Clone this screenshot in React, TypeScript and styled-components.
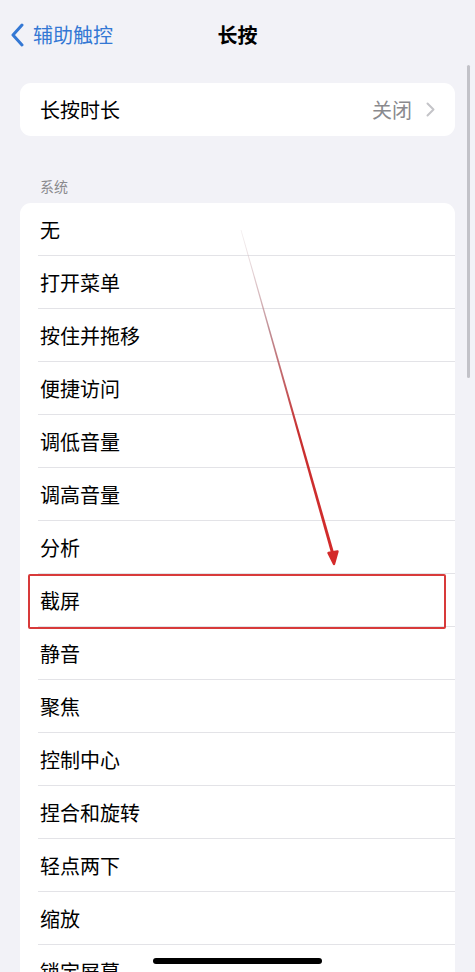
import React from "react";
import styled, { createGlobalStyle } from "styled-components";

const GlobalStyle = createGlobalStyle`
  html, body {
    margin: 0;
    padding: 0;
    background: #f2f2f7;
  }
  body {
    font-family: "Noto Sans CJK SC", "Noto Sans", sans-serif;
    -webkit-font-smoothing: antialiased;
  }
`;

const Page = styled.div`
  position: relative;
  width: 475px;
  height: 972px;
  overflow: hidden;
  background: #f2f2f7;
`;

const NavBar = styled.header`
  position: relative;
  height: 70px;
  display: flex;
  align-items: center;
  justify-content: center;
`;

const BackButton = styled.button`
  position: absolute;
  left: 10px;
  top: 22px;
  display: flex;
  align-items: center;
  gap: 9px;
  padding: 0;
  border: none;
  background: none;
  color: #3478d4;
  font-family: inherit;
  font-size: 20px;
  line-height: 26px;
  cursor: pointer;
`;

const Title = styled.h1`
  margin: 0;
  font-size: 20px;
  font-weight: 600;
  color: #000;
  line-height: 26px;
`;

const Card = styled.section`
  margin: 0 20px;
  background: #fff;
  border-radius: 11px;
  overflow: hidden;
`;

const TopCard = styled(Card)`
  margin-top: 13px;
`;

const Row = styled.div<{ $last?: boolean }>`
  position: relative;
  height: 53px;
  display: flex;
  align-items: center;
  padding: 0 20px;
  font-size: 20px;
  color: #000;

  &::after {
    content: "";
    display: ${(p) => (p.$last ? "none" : "block")};
    position: absolute;
    left: 18px;
    right: 0;
    bottom: 0;
    height: 1px;
    background: #e3e3e7;
  }
`;

const Label = styled.span`
  flex: 1;
`;

const Value = styled.span`
  color: #8a8a8e;
  font-size: 20px;
  margin-right: 14px;
`;

const SectionHeader = styled.div`
  margin: 40px 0 7px 40px;
  font-size: 14px;
  line-height: 20px;
  color: #8a8a8e;
`;

const Highlight = styled.div`
  position: absolute;
  left: 28px;
  top: 574px;
  width: 414px;
  height: 51px;
  border: 2px solid #d83a3a;
  border-radius: 2px;
  pointer-events: none;
`;

const ArrowLayer = styled.svg`
  position: absolute;
  left: 0;
  top: 0;
  pointer-events: none;
`;

const ScrollIndicator = styled.div`
  position: absolute;
  left: 467px;
  top: 65px;
  width: 3px;
  height: 313px;
  border-radius: 2px;
  background: #c2c2c8;
`;

const HomeIndicator = styled.div`
  position: absolute;
  left: 153px;
  top: 958px;
  width: 169px;
  height: 6px;
  border-radius: 3px;
  background: #000;
`;

const ChevronLeft = () => (
  <svg width="14" height="24" viewBox="0 0 14 24">
    <path
      d="M12 2 L3 12 L12 22"
      fill="none"
      stroke="currentColor"
      strokeWidth="3"
      strokeLinecap="round"
      strokeLinejoin="round"
    />
  </svg>
);

const ChevronRight = () => (
  <svg width="9" height="15" viewBox="0 0 9 15">
    <path
      d="M1.5 1.5 L7.5 7.5 L1.5 13.5"
      fill="none"
      stroke="#c4c4c8"
      strokeWidth="2"
      strokeLinecap="round"
      strokeLinejoin="round"
    />
  </svg>
);

const items = [
  "无",
  "打开菜单",
  "按住并拖移",
  "便捷访问",
  "调低音量",
  "调高音量",
  "分析",
  "截屏",
  "静音",
  "聚焦",
  "控制中心",
  "捏合和旋转",
  "轻点两下",
  "缩放",
  "锁定屏幕",
];

export default function App() {
  return (
    <Page>
      <GlobalStyle />
      <NavBar>
        <BackButton>
          <ChevronLeft />
          辅助触控
        </BackButton>
        <Title>长按</Title>
      </NavBar>

      <TopCard>
        <Row $last>
          <Label>长按时长</Label>
          <Value>关闭</Value>
          <ChevronRight />
        </Row>
      </TopCard>

      <SectionHeader>系统</SectionHeader>
      <Card>
        {items.map((item, i) => (
          <Row key={item} $last={i === items.length - 1}>
            <Label>{item}</Label>
          </Row>
        ))}
      </Card>

      <Highlight />

      <ArrowLayer width="475" height="972" viewBox="0 0 475 972">
        <defs>
          <linearGradient
            id="arrowFade"
            gradientUnits="userSpaceOnUse"
            x1="241"
            y1="230"
            x2="335"
            y2="565"
          >
            <stop offset="0" stopColor="#d8c8cc" stopOpacity="0.3" />
            <stop offset="0.3" stopColor="#b07078" stopOpacity="0.8" />
            <stop offset="0.6" stopColor="#c83030" />
            <stop offset="1" stopColor="#d42a2a" />
          </linearGradient>
        </defs>
        <polygon
          points="240.6,230 241.4,230 335.6,558 332.4,558"
          fill="url(#arrowFade)"
        />
        <path
          d="M328.5 553 L334 564 L337.5 551.5 Z"
          fill="#d42a2a"
          stroke="#d42a2a"
          strokeWidth="2.4"
          strokeLinejoin="round"
        />
      </ArrowLayer>

      <ScrollIndicator />
      <HomeIndicator />
    </Page>
  );
}
